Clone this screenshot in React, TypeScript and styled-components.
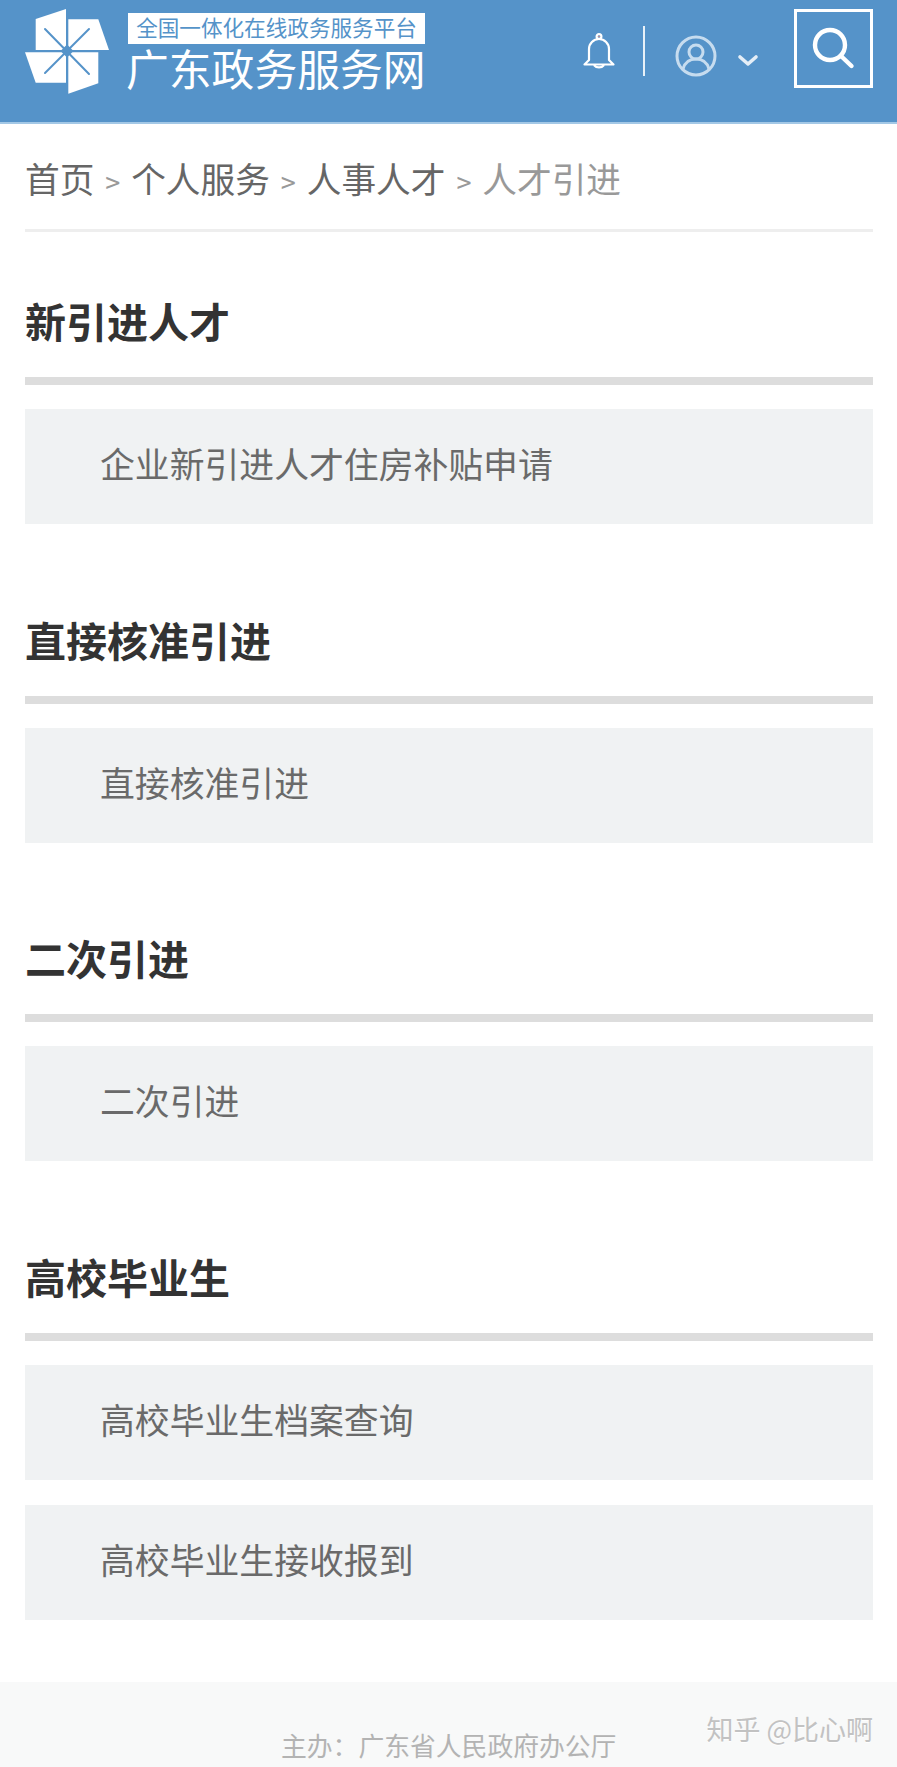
import styled, { createGlobalStyle } from 'styled-components';

const sections = [
  { title: '新引进人才', items: ['企业新引进人才住房补贴申请'] },
  { title: '直接核准引进', items: ['直接核准引进'] },
  { title: '二次引进', items: ['二次引进'] },
  { title: '高校毕业生', items: ['高校毕业生档案查询', '高校毕业生接收报到'] },
];

const crumbs = ['首页', '个人服务', '人事人才'];

export default function App() {
  return (
    <Page>
      <GlobalStyle />
      <Header>
        <Brand>
          <LogoMark />
          <BrandText>
            <Slogan>全国一体化在线政务服务平台</Slogan>
            <SiteName>广东政务服务网</SiteName>
          </BrandText>
        </Brand>
        <Tools>
          <IconSlot $top={23} $left={0}>
            <BellIcon />
          </IconSlot>
          <Divider />
          <IconSlot $top={26} $left={30}>
            <UserIcon />
          </IconSlot>
          <IconSlot $top={45} $left={20}>
            <ChevronIcon />
          </IconSlot>
          <SearchButton>
            <SearchIcon />
          </SearchButton>
        </Tools>
      </Header>

      <Main>
        <Breadcrumb>
          {crumbs.map((c) => (
            <span key={c}>
              {c}
              <Sep>&gt;</Sep>
            </span>
          ))}
          <Current>人才引进</Current>
        </Breadcrumb>

        {sections.map((s) => (
          <Section key={s.title}>
            <SectionTitle>{s.title}</SectionTitle>
            <SectionBar />
            <ItemList>
              {s.items.map((item) => (
                <Item key={item}>{item}</Item>
              ))}
            </ItemList>
          </Section>
        ))}
      </Main>

      <Footer>主办：广东省人民政府办公厅</Footer>
      <Watermark>知乎 @比心啊</Watermark>
    </Page>
  );
}

function LogoMark() {
  return (
    <svg width="84" height="85" viewBox="10 9 84 85" fill="#fff">
      <polygon points="20.7,19 51,9 51,50 20.7,50" />
      <polygon points="53.3,19.3 83.3,19.3 94,50 53.3,50" />
      <polygon points="10,52.3 51,52.3 51,82.7 20.7,82.7" />
      <polygon points="53.3,52.3 83.3,52.3 83.3,83.3 53.3,93.7" />
      <g stroke="#5593c9" strokeWidth="2" strokeLinecap="round">
        <line x1="30" y1="29" x2="74" y2="74" />
        <line x1="74" y1="29" x2="30" y2="73" />
      </g>
      <polygon points="52,44.5 58.5,51 52,57.5 45.5,51" fill="#5593c9" />
    </svg>
  );
}

function BellIcon() {
  return (
    <svg width="34" height="40" viewBox="0 0 34 40" fill="none" stroke="#fff" strokeWidth="2.2" strokeLinejoin="round" strokeLinecap="round">
      <circle cx="17" cy="4.5" r="2.4" />
      <circle cx="17" cy="4.5" r="0.8" fill="#e58a7c" stroke="none" />
      <path d="M7 28V17a10 10 0 0 1 20 0v11l4.5 4.5h-29z" />
      <path d="M12.5 33.5a5 3.5 0 0 0 9 0" />
    </svg>
  );
}

function UserIcon() {
  return (
    <svg width="42" height="42" viewBox="0 0 42 42" fill="none" stroke="#c6dcef" strokeWidth="3">
      <circle cx="21" cy="21" r="19" />
      <circle cx="21" cy="17" r="7" />
      <path d="M8 34c2-7 7-10 13-10s11 3 13 10" />
    </svg>
  );
}

function ChevronIcon() {
  return (
    <svg width="22" height="14" viewBox="0 0 22 14" fill="none" stroke="#e4eef7" strokeWidth="3.6" strokeLinecap="round" strokeLinejoin="round">
      <path d="M3 3l8 7 8-7" />
    </svg>
  );
}

function SearchIcon() {
  return (
    <svg width="44" height="44" viewBox="0 0 44 44" fill="none" stroke="#fff" strokeWidth="4.4" strokeLinecap="round">
      <circle cx="19" cy="19" r="15" />
      <path d="M30 30l10.5 10" />
    </svg>
  );
}

const GlobalStyle = createGlobalStyle`
  html, body {
    margin: 0;
    padding: 0;
    background: #fff;
  }
  body {
    font-family: "Noto Sans CJK SC", "Noto Sans", sans-serif;
  }
`;

const Page = styled.div`
  position: relative;
  width: 897px;
  height: 1767px;
  overflow: hidden;
  background: #fff;
`;

const Header = styled.header`
  box-sizing: border-box;
  height: 124px;
  padding: 9px 24px 0 25px;
  display: flex;
  justify-content: space-between;
  align-items: flex-start;
  background: #5593c9;
  border-bottom: 2px solid #a3c8e6;
`;

const Brand = styled.div`
  display: flex;
  align-items: flex-start;
`;

const BrandText = styled.div`
  margin-left: 17px;
  display: flex;
  flex-direction: column;
  align-items: flex-start;
`;

const Slogan = styled.div`
  margin: 4px 0 0 2px;
  width: 297px;
  height: 31px;
  background: #fff;
  color: #5593c9;
  font-size: 21.6px;
  line-height: 28px;
  text-align: center;
  white-space: nowrap;
`;

const SiteName = styled.div`
  margin-top: 1px;
  color: #fff;
  font-size: 42.8px;
  line-height: 44px;
  white-space: nowrap;
`;

const Tools = styled.div`
  display: flex;
  align-items: flex-start;
`;

const IconSlot = styled.span<{ $top: number; $left: number }>`
  display: block;
  margin-top: ${({ $top }) => $top}px;
  margin-left: ${({ $left }) => $left}px;

  svg {
    display: block;
  }
`;

const Divider = styled.div`
  width: 2px;
  height: 50px;
  margin: 17px 0 0 27px;
  background: #e8f1f8;
`;

const SearchButton = styled.div`
  box-sizing: border-box;
  width: 79px;
  height: 79px;
  margin-left: 35px;
  padding: 14px 0 0 14px;
  border: 3px solid #fff;
`;

const Main = styled.main`
  padding: 0 24px 0 25px;
`;

const Breadcrumb = styled.nav`
  box-sizing: border-box;
  height: 108px;
  padding-top: 30px;
  border-bottom: 3px solid #eeeeee;
  color: #666;
  font-size: 34.7px;
  line-height: 48px;
  white-space: nowrap;
`;

const Sep = styled.span`
  margin: 0 10.9px;
  color: #999;
  font-size: 27px;
`;

const Current = styled.span`
  color: #999;
`;

const Section = styled.section`
  margin-top: 58px;

  & + & {
    margin-top: 84.7px;
  }
`;

const SectionTitle = styled.h2`
  margin: 0;
  color: #333;
  font-size: 41px;
  font-weight: 700;
  line-height: 60px;
`;

const SectionBar = styled.div`
  height: 8px;
  margin-top: 27px;
  background: #dddddd;
`;

const ItemList = styled.div`
  margin-top: 24px;
  display: flex;
  flex-direction: column;
  gap: 25px;
`;

const Item = styled.div`
  height: 115px;
  padding-left: 75px;
  background: #f0f2f3;
  color: #6a6a6a;
  font-size: 34.85px;
  line-height: 109px;
`;

const Footer = styled.footer`
  height: 85px;
  margin-top: 62px;
  padding: 45px 0 0 281px;
  box-sizing: border-box;
  background: #f8f9f9;
  color: #b3b3b3;
  font-size: 25.8px;
  line-height: 36px;
  white-space: nowrap;
`;

const Watermark = styled.div`
  position: absolute;
  top: 1710px;
  right: 24px;
  color: #c2c2c2;
  font-size: 27px;
  line-height: 38px;
  white-space: nowrap;
  text-shadow: 0 1px 1px rgba(255, 255, 255, 0.9);
`;
